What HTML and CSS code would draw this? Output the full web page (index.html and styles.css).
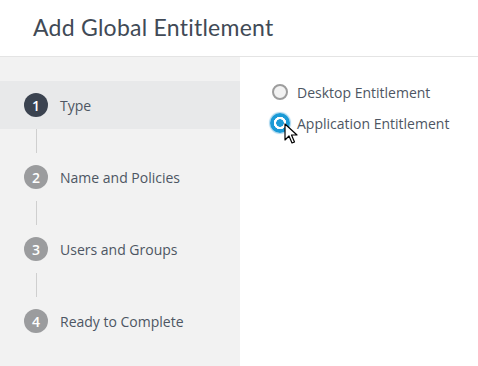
FILE: index.html
```html
<!DOCTYPE html>
<html lang="en">
<head>
    <meta charset="UTF-8">
    <title>Add Global Entitlement</title>
    <link rel="stylesheet" href="styles.css">
</head>
<body>
    <div class="dialog">
        <div class="header">
            <h1>Add Global Entitlement</h1>
        </div>
        <div class="body">
            <ul class="steps">
                <li class="step active"><span class="num">1</span> Type</li>
                <li class="line"></li>
                <li class="step"><span class="num">2</span> Name and Policies</li>
                <li class="line"></li>
                <li class="step"><span class="num">3</span> Users and Groups</li>
                <li class="line"></li>
                <li class="step"><span class="num">4</span> Ready to Complete</li>
            </ul>
            <div class="content">
                <label class="radio"><span class="dot"></span> Desktop Entitlement</label>
                <label class="radio checked"><span class="dot"></span> Application Entitlement
                    <svg class="cursor" width="14" height="22" viewBox="0 0 14 22">
                        <path d="M1 1 L1 17 L5 13 L8 20 L10.5 19 L7.5 12 L13 12 Z" fill="#fff" stroke="#000" stroke-width="1.2" stroke-linejoin="round"/>
                    </svg>
                </label>
            </div>
        </div>
    </div>
</body>
</html>
```

FILE: styles.css
```css
body{
    margin: 0;
    font-family: "Open Sans", sans-serif;
    background: #fff;
}
.dialog{
    width: 478px;
    height: 366px;
    display: flex;
    flex-direction: column;
}
.header{
    height: 56px;
    border-bottom: 1px solid #e4e4e4;
    display: flex;
    align-items: center;
}
h1{
    margin: 0 0 2px 33px;
    font-family: "Lato", sans-serif;
    font-weight: 400;
    font-size: 23px;
    letter-spacing: 0.25px;
    color: #414a56;
}
.body{
    flex: 1;
    display: flex;
}
/* wizard steps */
.steps{
    width: 240px;
    margin: 0;
    padding: 24px 0 0;
    list-style: none;
    background: #f2f2f2;
}
.step{
    height: 48px;
    display: flex;
    align-items: center;
    padding-left: 24px;
    font-size: 14px;
    color: #4d5663;
}
.step.active{
    background: #e8e9ea;
}
.num{
    width: 24px;
    height: 24px;
    border-radius: 50%;
    background: #9b9c9e;
    color: #fff;
    font-size: 14px;
    font-weight: 600;
    display: flex;
    align-items: center;
    justify-content: center;
    margin-right: 12px;
}
.active .num{
    background: #3b4350;
}
.line{
    height: 24px;
    width: 1px;
    margin-left: 36px;
    background: #cfcfcf;
}
/* options */
.content{
    flex: 1;
    padding: 26px 0 0 32px;
}
.radio{
    position: relative;
    display: flex;
    align-items: center;
    height: 18px;
    margin-bottom: 13px;
    font-size: 14px;
    color: #4d5663;
}
.dot{
    width: 16px;
    height: 16px;
    box-sizing: border-box;
    border: 2px solid #9d9d9d;
    border-radius: 50%;
    background: #f2f2f2;
    margin-right: 9px;
}
.checked .dot{
    width: 20px;
    height: 20px;
    margin: 0 7px 0 -2px;
    border: none;
    background: radial-gradient(circle, #1a9ad6 0 3.5px, #fff 4px 6px, #1a9ad6 6.5px);
    box-shadow: 0 0 1px 1px #a9d6ee;
}
.cursor{
    position: absolute;
    left: 12px;
    top: 9px;
}
```
